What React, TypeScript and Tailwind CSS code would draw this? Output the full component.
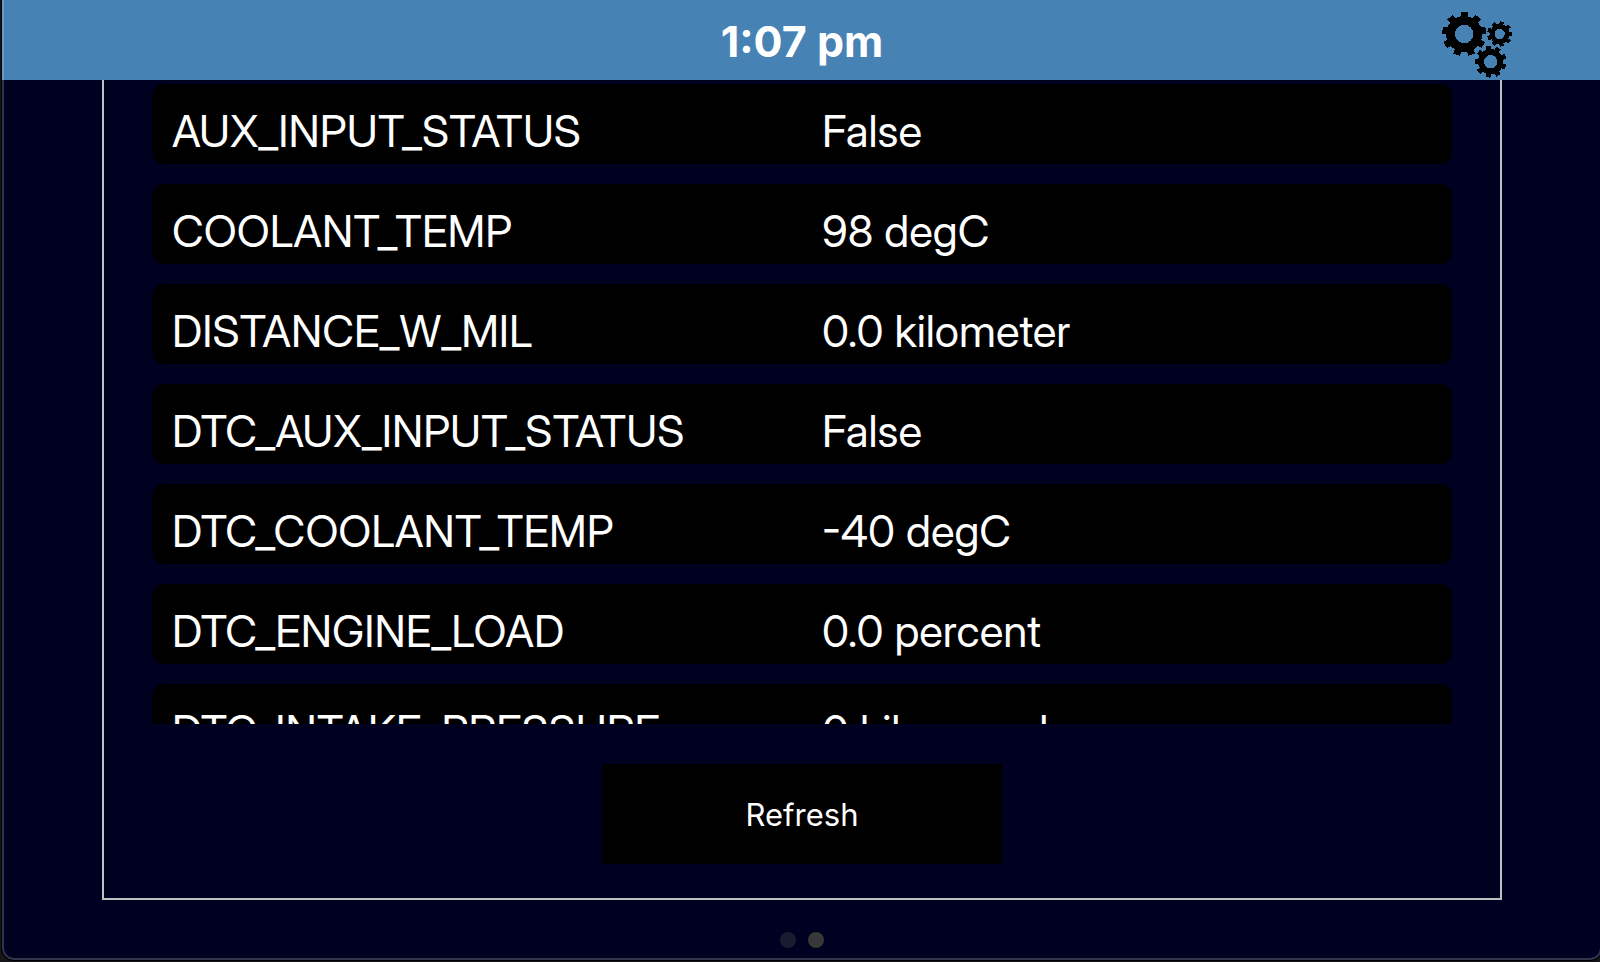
import React from "react";

const readings = [
  { name: "AUX_INPUT_STATUS", value: "False" },
  { name: "COOLANT_TEMP", value: "98 degC" },
  { name: "DISTANCE_W_MIL", value: "0.0 kilometer" },
  { name: "DTC_AUX_INPUT_STATUS", value: "False" },
  { name: "DTC_COOLANT_TEMP", value: "-40 degC" },
  { name: "DTC_ENGINE_LOAD", value: "0.0 percent" },
  { name: "DTC_INTAKE_PRESSURE", value: "0 kilopascal" },
];

const TEETH = [0, 40, 80, 120, 160, 200, 240, 280, 320];

type GearProps = { cx: number; cy: number; outer: number; body: number; hole: number; tooth: number; turn: number };

function Gear({ cx, cy, outer, body, hole, tooth, turn }: GearProps) {
  return (
    <g transform={`translate(${cx} ${cy}) rotate(${turn})`}>
      <circle r={(body + hole) / 2} fill="none" stroke="black" strokeWidth={body - hole} />
      {TEETH.map((angle) => (
        <rect
          key={angle}
          x={body - 1.5}
          y={-tooth / 2}
          width={outer - body + 1.5}
          height={tooth}
          transform={`rotate(${angle})`}
        />
      ))}
    </g>
  );
}

function GearsIcon() {
  return (
    <svg className="h-20 w-20" viewBox="0 0 80 80" shapeRendering="crispEdges" aria-hidden="true">
      <Gear cx={26.2} cy={34} outer={22} body={18} hole={9.2} tooth={7} turn={-90} />
      <Gear cx={61.7} cy={34} outer={12.6} body={10} hole={5.1} tooth={4.2} turn={0} />
      <Gear cx={52.7} cy={61.7} outer={15.8} body={12.6} hole={6.7} tooth={5} turn={-20} />
    </svg>
  );
}

export default function App() {
  return (
    <div className="h-screen overflow-hidden bg-[#161618] pb-[2px] pl-[2px] font-['Inter',sans-serif] text-white">
      <div className="relative -mr-[2px] flex h-full flex-col overflow-hidden rounded-b-xl bg-[#000020] shadow-[0_0_0_1px_black]">
        <header className="grid h-20 shrink-0 grid-cols-[1fr_auto_1fr] items-center bg-[#4682b4]">
          <time className="col-start-2 pt-[2px] text-[43px] leading-[52px] font-bold">1:07 pm</time>
          <button type="button" aria-label="Settings" className="mr-[84px] justify-self-end">
            <GearsIcon />
          </button>
        </header>

        <main className="mx-[100px] flex min-h-0 flex-1 flex-col items-center border-x-2 border-b-2 border-[#c0c0c0] px-12 pb-[34px]">
          <div className="min-h-0 w-full flex-1 overflow-hidden pt-1">
            <dl className="flex flex-col gap-5 font-['Inter_Display','Inter',sans-serif]">
              {readings.map(({ name, value }) => (
                <div
                  key={name}
                  className="grid h-20 shrink-0 grid-cols-2 items-center rounded-xl bg-black pt-[14px] text-[44px] leading-[52px]"
                >
                  <dt className="pl-5">{name}</dt>
                  <dd className="pl-5">{value}</dd>
                </div>
              ))}
            </dl>
          </div>
          <button type="button" className="mt-10 h-[100px] w-[400px] shrink-0 bg-black pt-[2px] text-[31px]">
            Refresh
          </button>
        </main>

        <nav aria-label="Pages" className="flex h-[60px] shrink-0 items-center justify-center gap-3 pt-5">
          <button type="button" aria-label="Page 1" className="size-4 rounded-full bg-[#1a1a30]" />
          <button type="button" aria-label="Page 2" aria-current="page" className="size-4 rounded-full bg-[#383838]" />
        </nav>

        <div className="pointer-events-none absolute inset-0 rounded-b-xl border-x-2 border-b-2 border-white/20" />
      </div>
    </div>
  );
}
